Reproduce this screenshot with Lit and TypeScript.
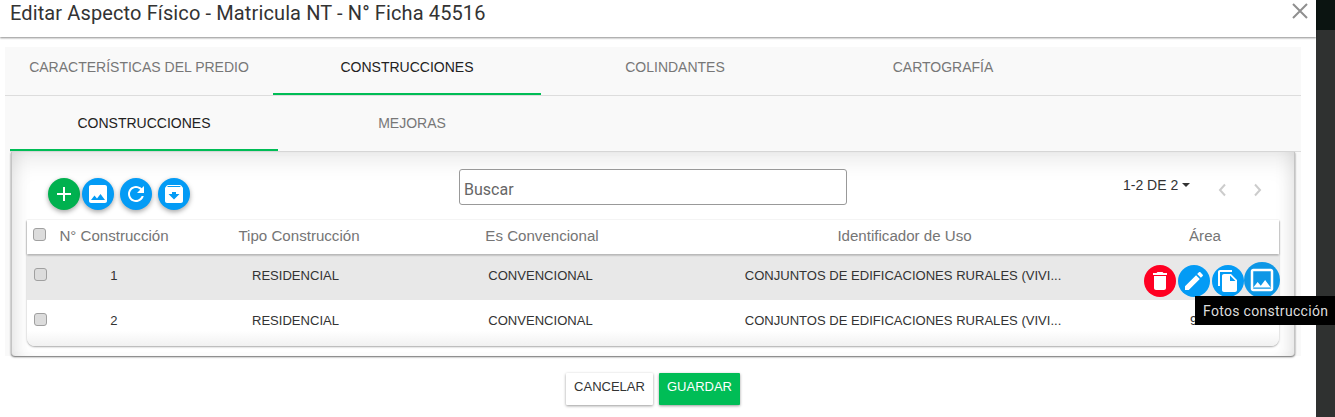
import { LitElement, html, css } from "lit";
import { customElement } from "lit/decorators.js";

const icon = (d: string, size = 24) => html`<svg width=${size} height=${size} viewBox="0 0 24 24" fill="currentColor"><path d=${d}></path></svg>`;
const I = {
  add: "M19 13h-6v6h-2v-6H5v-2h6V5h2v6h6v2z",
  image: "M21 19V5c0-1.1-.9-2-2-2H5c-1.1 0-2 .9-2 2v14c0 1.1.9 2 2 2h14c1.1 0 2-.9 2-2zM8.5 13.5l2.5 3.01L14.5 12l4.500 6H5l3.500-4.500z",
  refresh: "M17.650 6.350C16.200 4.900 14.210 4 12 4c-4.420 0-7.990 3.580-7.990 8s3.570 8 7.990 8c3.730 0 6.840-2.550 7.730-6h-2.080c-.82 2.330-3.040 4-5.650 4-3.310 0-6-2.690-6-6s2.690-6 6-6c1.660 0 3.140.69 4.220 1.780L13 11h7V4l-2.350 2.350z",
  archive: "M20.540 5.230l-1.390-1.680C18.880 3.210 18.470 3 18 3H6c-.47 0-.88.21-1.160.55L3.460 5.230C3.170 5.570 3 6.020 3 6.500V19c0 1.100.9 2 2 2h14c1.100 0 2-.9 2-2V6.500c0-.48-.17-.93-.46-1.270zM12 17.500L6.500 12H10v-2h4v2h3.500L12 17.500zM5.120 5l.81-1h12l.94 1H5.120z",
  del: "M6 19c0 1.100.9 2 2 2h8c1.100 0 2-.9 2-2V7H6v12zM19 4h-3.500l-1-1h-5l-1 1H5v2h14V4z",
  edit: "M3 17.250V21h3.750L17.810 9.940l-3.750-3.750L3 17.250zM20.710 7.040c.39-.39.39-1.020 0-1.410l-2.340-2.340c-.39-.39-1.020-.39-1.410 0l-1.830 1.830 3.750 3.750 1.830-1.830z",
  copy: "M16 1H4c-1.100 0-2 .9-2 2v14h2V3h12V1zm-1 4l6 6v10c0 1.100-.9 2-2 2H7.990C6.890 23 6 22.100 6 21l.01-14c0-1.100.89-2 1.990-2h7zm-1 7h5.500L14 6.500V12z",
  imageOutline: "M19 5v14H5V5h14m0-2H5c-1.100 0-2 .9-2 2v14c0 1.100.9 2 2 2h14c1.100 0 2-.9 2-2V5c0-1.100-.9-2-2-2zM8.500 13.500l2.500 3.010L14.500 12l4.500 6H5l3.500-4.500z",
};

const rows = [{ n: "1" }, { n: "2" }];

@customElement("app-root")
export class AppRoot extends LitElement {
  static styles = css`
    :host { display: block; width: 1335px; height: 417px; overflow: hidden; background: #2f3130; font-family: "Liberation Sans", Arial, sans-serif; }
    .shell { position: relative; display: flex; height: 417px; }
    .modal { width: 1316px; height: 417px; background: #fff; display: flex; flex-direction: column; flex: none; }
    .strip { flex: 1; display: flex; flex-direction: column; }
    .strip-top { height: 30px; background: #0b1411; }
    .strip-rest { flex: 1; background: #2f3130; }
    .head { height: 37px; flex: none; display: flex; justify-content: space-between; align-items: flex-start; padding: 0 7px 0 10px; box-shadow: 0 1px 2px rgba(0,0,0,.45); position: relative; }
    .title { margin: 0; font-family: Roboto, sans-serif; font-weight: 400; font-size: 20px; line-height: 26px; color: #333; letter-spacing: .12px; }
    .close { color: #8f8f8f; display: block; margin-top: 2px; }
    .content { margin: 10px 15px 0 5px; background: #f9f9f9; display: flex; flex-direction: column; }
    .tabs { display: flex; border-bottom: 1px solid #ddd; height: 48px; }
    .tab { width: 268px; height: 48px; display: flex; align-items: center; justify-content: center; font-size: 14px; color: #777; box-sizing: border-box; padding-bottom: 8px; }
    .tab.active { color: #222; border-bottom: 2px solid #00bd56; padding-bottom: 6px; }
    .subtabs { margin-left: 5px; height: 55px; border-bottom: 1px solid #ddd; }
    .subtabs .tab { height: 55px; padding-bottom: 2px; }
    .subtabs .tab.active { padding-bottom: 0; }
    .panel { margin: 0 6px 0 6px; height: 204px; box-sizing: border-box; background: #fff; border-right: 1px solid #c4c4c4; border-left: 1px solid #c4c4c4; box-shadow: 0 1px 2px rgba(0,0,0,.6), inset 0 14px 26px -8px rgba(0,0,0,.1), inset -14px 0 18px -12px rgba(0,0,0,.1), inset 14px 0 18px -12px rgba(0,0,0,.1); border-radius: 0 0 4px 4px; padding: 0 15px; display: flex; flex-direction: column; }
    .toolbar { height: 68px; flex: none; display: grid; grid-template-columns: 432px 388px 1fr; align-items: start; }
    .tools { display: flex; margin: 26px 0 0 21px; }
    .fab { width: 32px; height: 32px; border-radius: 50%; background: #039bf5; color: #fff; display: flex; align-items: center; justify-content: center; box-shadow: 0 2px 5px rgba(0,0,0,.35); margin-right: 6px; flex: none; }
    .fab.green { background: #00b14f; margin-right: 2px; }
    .search { margin-top: 17px; height: 36px; border: 1px solid #999; border-radius: 3px; box-sizing: border-box; font-family: Roboto, sans-serif; font-size: 16px; color: #666; padding: 10px 4px 0; background: #fff; }
    .pager { display: flex; align-items: flex-start; padding: 25px 0 0 276px; font-size: 14px; color: #333; }
    .caret { width: 0; height: 0; border-left: 4px solid transparent; border-right: 4px solid transparent; border-top: 4px solid #333; margin: 6px 0 0 4px; }
    .chev { color: #ccc; margin-top: 5px; }
    .chev.first { margin-left: 26px; }
    .chev.second { margin-left: 24px; }
    .table { position: relative; background: linear-gradient(180deg, #fff 88%, #f1f1f1 100%); border-radius: 0 0 8px 8px; box-shadow: 0 1px 2px rgba(0,0,0,.35); height: 126px; }
    .thead { display: grid; grid-template-columns: 30px 114px 256px 230px 495px 106px 1fr; height: 34px; align-items: center; font-size: 15.1px; color: #757575; text-align: center; background: #fff; box-shadow: 0 1px 2px rgba(0,0,0,.4); position: relative; margin-bottom: 1px; padding-bottom: 3px; box-sizing: border-box; }
    .row { display: grid; grid-template-columns: 30px 114px 249px 241px 484px 1fr; height: 41px; align-items: center; font-size: 13.05px; color: #333; text-align: center; padding-bottom: 4px; box-sizing: content-box; }
    .row.hover { background: #e8e8e8; }
    .area { text-align: left; padding-left: 45px; }
    .check { width: 12.5px; height: 12.5px; box-sizing: border-box; background: #dcdcdc; border: 1px solid #a0a0a0; border-radius: 3px; margin: 0 0 2px 6px; }
    .row .check { margin-left: 7px; }
    .actions { position: absolute; top: 45px; left: 1117px; display: flex; }
    .act { width: 32px; height: 32px; border-radius: 50%; background: #039bf5; color: #fff; display: flex; align-items: center; justify-content: center; margin-right: 2px; flex: none; }
    .act.red { background: #ff0022; }
    .act.big { width: 36px; height: 36px; margin: -3px 0 0 -2px; background: #0d97e6; }
    .tooltip { position: absolute; left: 1168px; top: 76px; width: 140px; height: 29px; background: #000; color: #ddd; font-family: Roboto, sans-serif; font-size: 14px; letter-spacing: .3px; display: flex; align-items: center; padding-left: 8px; box-sizing: border-box; white-space: nowrap; }
    .footer { display: flex; justify-content: center; gap: 6px; margin-top: 17px; padding-right: 10px; }
    .btn { height: 32px; box-sizing: border-box; display: flex; align-items: flex-start; padding-top: 6px; font-size: 13px; border-radius: 1px; box-shadow: 0 1px 3px rgba(0,0,0,.4); }
    .btn.cancel { width: 87px; justify-content: center; background: #fff; color: #333; }
    .btn.save { width: 81px; justify-content: center; background: #00bd56; color: #fff; }
  `;

  render() {
    return html`<div class="shell">
      <div class="modal">
        <div class="head">
          <h4 class="title">Editar Aspecto Físico - Matricula NT - N° Ficha 45516</h4>
          <svg class="close" width="18" height="18" viewBox="0 0 18 18" fill="none" stroke="currentColor" stroke-width="2"><path d="M2 2l14 14M16 2L2 16"></path></svg>
        </div>
        <div class="content">
          <div class="tabs">
            <div class="tab">CARACTERÍSTICAS DEL PREDIO</div>
            <div class="tab active">CONSTRUCCIONES</div>
            <div class="tab">COLINDANTES</div>
            <div class="tab">CARTOGRAFÍA</div>
          </div>
          <div class="tabs subtabs">
            <div class="tab active">CONSTRUCCIONES</div>
            <div class="tab">MEJORAS</div>
          </div>
          <div class="panel">
            <div class="toolbar">
              <div class="tools">
                <div class="fab green">${icon(I.add)}</div>
                <div class="fab">${icon(I.image)}</div>
                <div class="fab">${icon(I.refresh)}</div>
                <div class="fab">${icon(I.archive)}</div>
              </div>
              <div class="search">Buscar</div>
              <div class="pager">
                <span>1-2 DE 2</span><span class="caret"></span>
                <svg class="chev first" width="12" height="16" viewBox="0 0 12 16" fill="none" stroke="currentColor" stroke-width="2"><path d="M9 2.500L4 8l5 5.500"></path></svg>
                <svg class="chev second" width="12" height="16" viewBox="0 0 12 16" fill="none" stroke="currentColor" stroke-width="2"><path d="M3 2.500L8 8l-5 5.500"></path></svg>
              </div>
            </div>
            <div class="table">
              <div class="thead">
                <div class="check"></div>
                <div>N° Construcción</div><div>Tipo Construcción</div><div>Es Convencional</div><div>Identificador de Uso</div><div>Área</div><div></div>
              </div>
              ${rows.map((r, i) => html`<div class="row ${i === 0 ? "hover" : "plain"}">
                <div class="check"></div>
                <div>${r.n}</div><div>RESIDENCIAL</div><div>CONVENCIONAL</div>
                <div>CONJUNTOS DE EDIFICACIONES RURALES (VIVI...</div>
                <div class="area">92</div>
              </div>`)}
              <div class="actions">
                <div class="act red">${icon(I.del)}</div>
                <div class="act">${icon(I.edit)}</div>
                <div class="act">${icon(I.copy)}</div>
                <div class="act big">${icon(I.imageOutline, 30)}</div>
              </div>
              <div class="tooltip">Fotos construcción</div>
            </div>
          </div>
        </div>
        <div class="footer">
          <div class="btn cancel">CANCELAR</div>
          <div class="btn save">GUARDAR</div>
        </div>
      </div>
      <div class="strip"><div class="strip-top"></div><div class="strip-rest"></div></div>
    </div>`;
  }
}
